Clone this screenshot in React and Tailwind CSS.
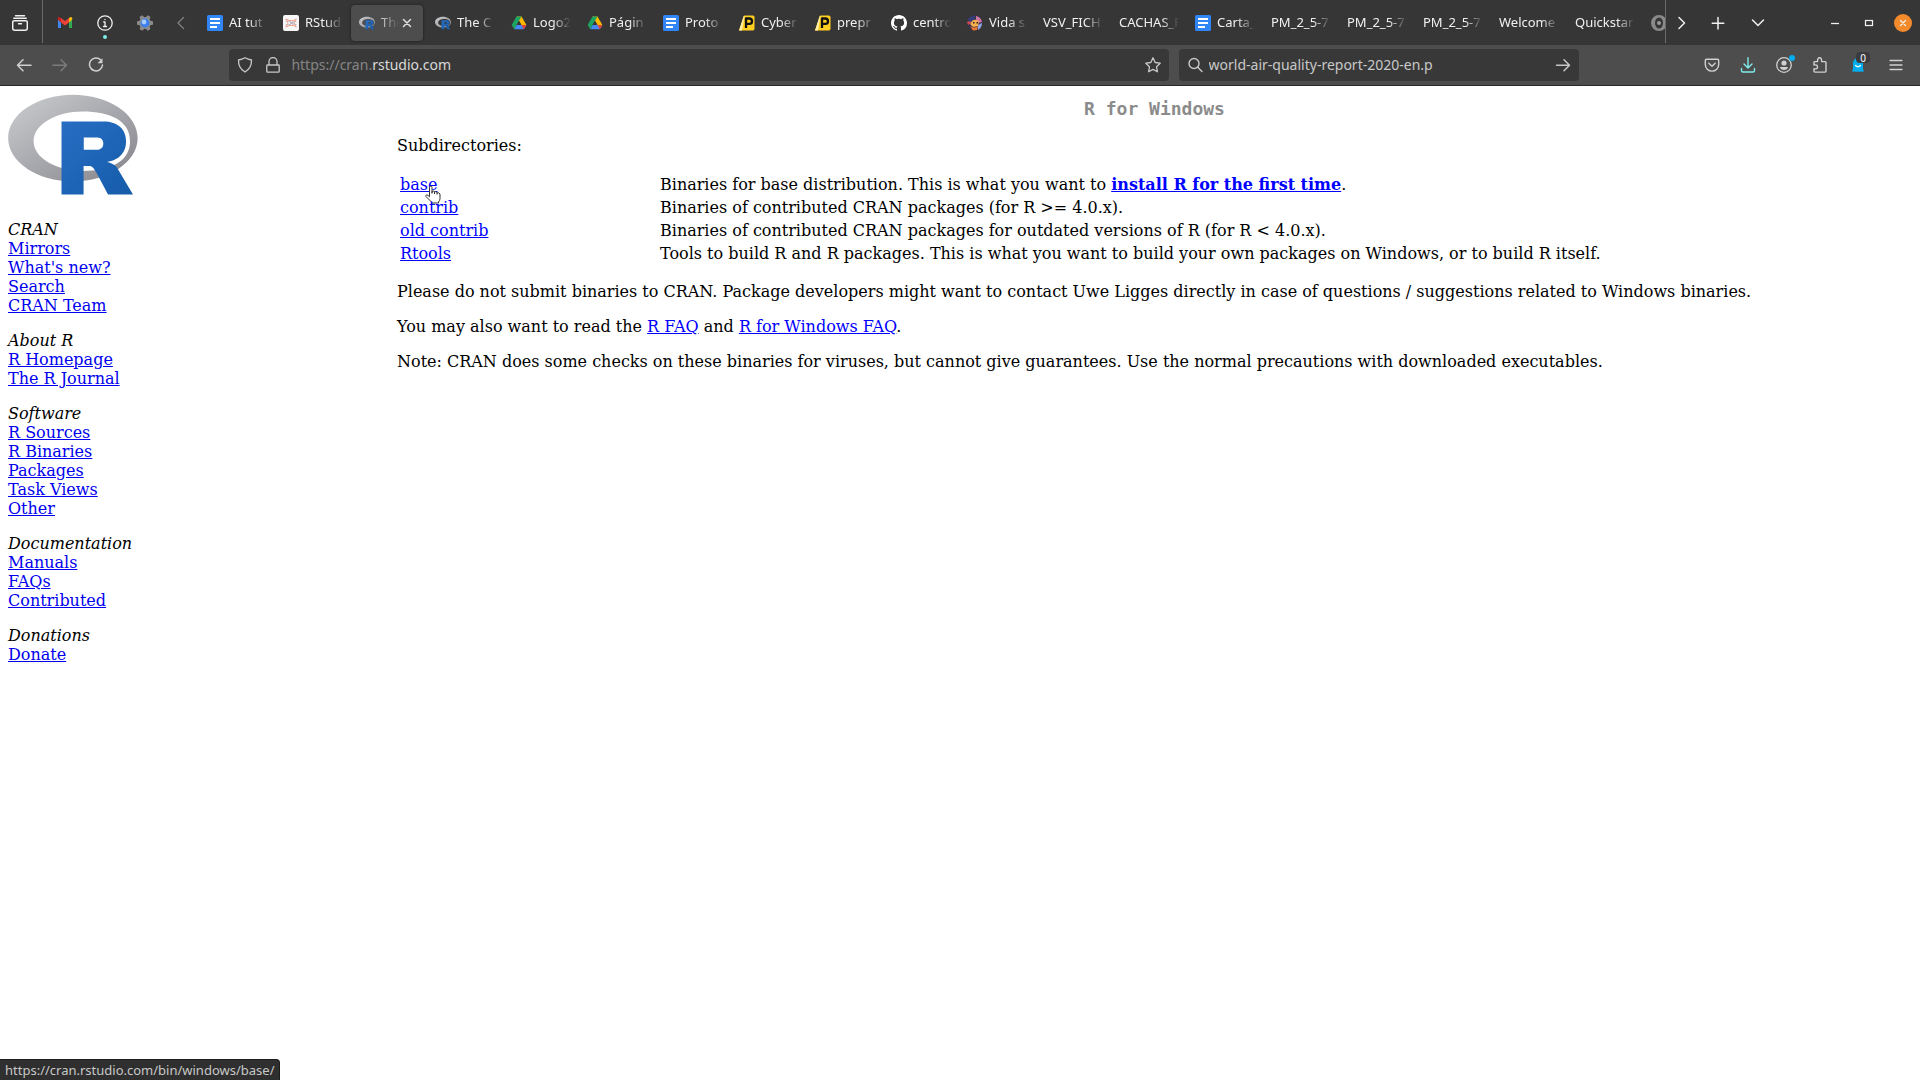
import React from "react";

const Svg = ({ children, className = "w-4 h-4", ...rest }) => (
  <svg
    viewBox="0 0 16 16"
    className={"block shrink-0 " + className}
    fill="none"
    stroke="currentColor"
    strokeWidth="1.25"
    strokeLinecap="round"
    strokeLinejoin="round"
    aria-hidden="true"
    {...rest}
  >
    {children}
  </svg>
);

const RLogo = ({ className, id }) => (
  <svg viewBox="0 0 724 561" className={"block shrink-0 " + className} role="img" aria-label="R logo">
    <defs>
      <linearGradient id={id + "g"} x1="0" y1="0" x2="1" y2="1">
        <stop offset="0" stopColor="#cbced0" />
        <stop offset="1" stopColor="#84838b" />
      </linearGradient>
      <linearGradient id={id + "b"} x1="0" y1="0" x2="1" y2="1">
        <stop offset="0" stopColor="#276dc3" />
        <stop offset="1" stopColor="#165caa" />
      </linearGradient>
    </defs>
    <path
      fill={"url(#" + id + "g)"}
      fillRule="evenodd"
      d="M361.453,485.937C162.329,485.937,0.906,377.828,0.906,244.469C0.906,111.109,162.329,3,361.453,3C560.578,3,722,111.109,722,244.469C722,377.828,560.578,485.937,361.453,485.937ZM416.641,97.406C265.289,97.406,142.594,171.314,142.594,262.484C142.594,353.654,265.289,427.562,416.641,427.562C567.992,427.562,679.687,377.033,679.687,262.484C679.687,147.971,567.992,97.406,416.641,97.406Z"
    />
    <path
      fill={"url(#" + id + "b)"}
      fillRule="evenodd"
      d="M550,377C550,377,571.822,383.585,584.5,390C588.899,392.226,596.51,396.668,602,402.5C607.378,408.212,610,414,610,414L696,559L557,559.062L492,437C492,437,478.69,414.131,470.5,407.5C463.668,401.969,460.755,400,454,400C449.298,400,420.974,400,420.974,400L421,558.974L298,559.026L298,152.938L545,152.938C545,152.938,657.5,154.967,657.5,262C657.5,369.033,550,377,550,377ZM496.5,241.024L422.037,240.976L422,310.026L496.5,310.002C496.5,310.002,531,309.895,531,274.877C531,239.155,496.5,241.024,496.5,241.024Z"
    />
  </svg>
);

const Docs = () => (
  <Svg stroke="none">
    <rect width="16" height="16" rx="1.5" fill="#3086f6" />
    <path d="M3 3h10v2H3zM3 7h10v2H3zM3 11h7v2H3z" fill="#fff" />
  </Svg>
);

const Drive = () => (
  <Svg stroke="none">
    <path d="M5.5 1.5h5l4.9 8.4h-5z" fill="#ffba00" />
    <path d="M3.2 14.3 5.6 10h9.8l-2.6 4.3z" fill="#4688f4" />
    <path d="M10.4 10h5l-2.6 4.3z" fill="#ea4335" />
    <path d="M5.5 1.5h5L3.2 14.3.7 10z" fill="#1ea362" />
    <path d="M8 5.8 10.4 10H5.6z" fill="#363636" />
  </Svg>
);

const Cyber = () => (
  <Svg stroke="none">
    <path d="M4.6 1.6Q5 .5 6.2.5h7.6A1.7 1.7 0 0 1 15.5 2.2v11.600A1.7 1.7 0 0 1 13.800 15.500H0z" fill="#ffce1f" />
    <path d="M4.600 1.600 5.600.6 3 15.500H0z" fill="#fff0a8" />
    <path d="M7 13V3.500h3.300a2.700 2.700 0 0 1 0 5.400H7" fill="none" stroke="#111" strokeWidth="2.300" strokeLinecap="butt" />
  </Svg>
);

const RStudio = () => (
  <Svg stroke="none">
    <rect width="16" height="16" rx="2" fill="#f7f7f8" />
    <g fill="none" strokeWidth="1">
      <path d="M3 4.500c4-1 6 7 10 7M3 11.500c4 1 6-7 10-7" stroke="#ef8f77" />
      <path d="M3 6.500c4-2 6 3 10 3M3 9.500c4 2 6-3 10-3" stroke="#a9b9cf" />
      <path d="M3 4 5 8 3 12M13 4 11 8l2 4M6 5.500h4M6 10.500h4" stroke="#f0a997" />
    </g>
  </Svg>
);

const Github = () => (
  <Svg stroke="none">
    <path
      fill="#fff"
      d="M8 0C3.580 0 0 3.580 0 8c0 3.540 2.290 6.530 5.470 7.590.4.070.55-.17.55-.38 0-.19-.01-.82-.01-1.490-2.010.37-2.530-.49-2.690-.94-.09-.23-.48-.94-.82-1.130-.28-.15-.68-.52-.01-.53.63-.01 1.080.58 1.230.82.72 1.210 1.870.87 2.330.66.07-.52.28-.87.51-1.070-1.780-.2-3.640-.89-3.640-3.950 0-.87.31-1.590.82-2.150-.08-.2-.36-1.020.08-2.120 0 0 .67-.21 2.200.82.64-.18 1.320-.27 2-.27s1.360.09 2 .27c1.530-1.040 2.200-.82 2.200-.82.44 1.100.16 1.920.08 2.120.51.56.82 1.270.82 2.150 0 3.070-1.870 3.750-3.650 3.950.29.25.54.73.54 1.480 0 1.070-.01 1.930-.01 2.200 0 .21.15.46.55.38A8.010 8.010 0 0 0 16 8c0-4.420-3.580-8-8-8z"
    />
  </Svg>
);

const Vida = () => (
  <Svg stroke="none">
    <circle cx="8" cy="8" r="7.500" fill="#3a3154" />
    <path d="M1 4Q5 0 8 1l-1 4-5 3z" fill="#343f78" />
    <path d="M9 1q5 1 6 6l-4 1-2-3z" fill="#d277a1" />
    <path d="M5 6q4-3 7 1l-1 4-5 1-3-3z" fill="#f5b04c" />
    <path d="M3 11q4 3 8 0l-1 4-4 .5z" fill="#ef7a2d" />
    <path d="m11 10 4-2q0 5-4 7z" fill="#8ca5dd" />
    <path d="M6 7h1.500v1.500H6zM9.500 7H11v1.500H9.500z" fill="#241a32" />
    <path d="M0 7l3-1 1 2-3 2z" fill="#cf4951" />
  </Svg>
);

const GreyDisc = () => (
  <Svg stroke="none">
    <circle cx="8" cy="8" r="8" fill="#8a8a8a" />
    <ellipse cx="8" cy="8" rx="4" ry="5.500" fill="#363636" />
    <circle cx="8" cy="8" r="2" fill="#9a9a9a" />
  </Svg>
);

const tabs = [
  { t: "AI tut", i: <Docs /> },
  { t: "RStud", i: <RStudio /> },
  { t: "The", i: <RLogo id="t1" className="w-4 h-4" />, active: true },
  { t: "The C", i: <RLogo id="t2" className="w-4 h-4" /> },
  { t: "Logo2", i: <Drive /> },
  { t: "Págin", i: <Drive /> },
  { t: "Proto", i: <Docs /> },
  { t: "Cyber", i: <Cyber /> },
  { t: "prepr", i: <Cyber /> },
  { t: "centro", i: <Github /> },
  { t: "Vida s", i: <Vida /> },
  { t: "VSV_FICH" },
  { t: "CACHAS_F" },
  { t: "Carta_", i: <Docs /> },
  { t: "PM_2_5-7" },
  { t: "PM_2_5-7" },
  { t: "PM_2_5-7" },
  { t: "Welcome" },
  { t: "Quickstar" },
  { t: "", i: <GreyDisc /> },
];

const Tab = ({ t, i, active }) => (
  <button
    role="tab"
    aria-selected={!!active}
    aria-label={t || "Tab"}
    className={
      "mx-0.5 flex h-9 w-[72px] shrink-0 items-center rounded pl-2 text-left text-[13px] " +
      (active ? "bg-[#4d4d4d] pr-2 text-[#d0d0d0] shadow-[0_0_3px_rgba(0,0,0,0.5)]" : "pr-1 text-[#f0f0f0]")
    }
  >
    {i}
    <span
      className={
        "min-w-0 flex-1 overflow-hidden whitespace-nowrap pb-0.5 [mask-image:linear-gradient(to_left,transparent,black_18px)] " +
        (i ? "ml-1.5" : "")
      }
    >
      {t || "\u00a0"}
    </span>
    {active && (
      <Svg className="w-4 h-4 text-[#e0e0e0]" strokeWidth="1.5">
        <path d="m4.500 4.500 7 7m0-7-7 7" />
      </Svg>
    )}
  </button>
);

const IconButton = ({ label, className, children }) => (
  <button aria-label={label} className={"relative flex shrink-0 items-center justify-center " + className}>
    {children}
  </button>
);

const sections = [
  ["CRAN", ["Mirrors", "What's new?", "Search", "CRAN Team"]],
  ["About R", ["R Homepage", "The R Journal"]],
  ["Software", ["R Sources", "R Binaries", "Packages", "Task Views", "Other"]],
  ["Documentation", ["Manuals", "FAQs", "Contributed"]],
  ["Donations", ["Donate"]],
];

const A = ({ children, className = "" }) => (
  <a href="#" className={"underline " + className}>
    {children}
  </a>
);

const Pointer = () => (
  <svg viewBox="0 0 18 20" className="pointer-events-none absolute left-[24px] top-[10px] h-5 w-[18px]" aria-hidden="true">
    <path
      d="M5.500 2.500Q5.500 1 6.700 1T8 2.500V8.500M8 8V6.500q1.200-1 2.500 0V9M10.500 7q1.400-.8 2.500.2V9.500M13 8q2-.8 3 1v4.500q0 2-1.500 3.500v1H7.500v-1L2 11.500q-.6-1.300.7-1.600 1 0 2.800 1.800V2.500"
      fill="#fff"
      stroke="#333"
      strokeWidth="1"
      strokeLinejoin="round"
    />
  </svg>
);

const rows = [
  ["base", <>Binaries for base distribution. This is what you want to <A className="font-bold">install R for the first time</A>.</>],
  ["contrib", "Binaries of contributed CRAN packages (for R >= 4.0.x)."],
  ["old contrib", "Binaries of contributed CRAN packages for outdated versions of R (for R < 4.0.x)."],
  ["Rtools", "Tools to build R and R packages. This is what you want to build your own packages on Windows, or to build R itself."],
];

export default function App() {
  return (
    <div className="flex min-h-screen flex-col bg-white font-['Noto_Sans',sans-serif] text-[14px] leading-5">
      <header className="border-b border-[#2a2629]">
        <div className="flex h-[45px] items-center bg-[#363636] text-[#f0f0f0]">
          <IconButton label="Archive" className="h-9 w-10">
            <Svg className="w-4 h-4" strokeWidth="1.500">
              <path d="M3.500.8h9M1.800 3.200h12.400M2.200 5.700h11.600q1.500 0 1.500 1.500v6q0 2-2 2H2.700q-2 0-2-2v-6q0-1.500 1.500-1.500zM6.500 8.700h3" />
            </Svg>
          </IconButton>
          <span className="mx-0.5 h-[43px] w-px self-start bg-[#6a6a6a]" />
          <IconButton label="Gmail" className="h-9 w-10">
            <Svg stroke="none">
              <path d="M1 3.500v9.500h3V7.500z" fill="#4285f4" />
              <path d="M15 3.500v9.500h-3V7.500z" fill="#34a853" />
              <path d="M.8 4.500V3.200q.7-1.700 2.500-.8L4 3v4.500z" fill="#c5221f" />
              <path d="M4 3l4 3 4-3v4.500l-4 3-4-3z" fill="#ea4335" />
              <path d="M15.200 4.500V3.200q-.7-1.700-2.500-.8L12 3v4.500z" fill="#fbbc04" />
            </Svg>
          </IconButton>
          <IconButton label="Info" className="h-9 w-10">
            <Svg>
              <circle cx="8" cy="8" r="7.200" strokeWidth="1.300" />
              <path d="M6.700 7H8v4.500M6.500 11.500h3M8 4.300v.3" strokeWidth="1.300" />
            </Svg>
            <span className="absolute bottom-0.5 left-[18px] h-1 w-1 rounded-full bg-[#80ebed]" />
          </IconButton>
          <IconButton label="Settings" className="h-9 w-10">
            <Svg stroke="none">
              <g fill="#8b8b8b">
                <rect x="6" y="0" width="4" height="16" rx="1" transform="rotate(30 8 8)" />
                <rect x="6" y="0" width="4" height="16" rx="1" transform="rotate(90 8 8)" />
                <rect x="6" y="0" width="4" height="16" rx="1" transform="rotate(150 8 8)" />
                <circle cx="8" cy="8" r="6" />
              </g>
              <circle cx="8" cy="8" r="4.400" fill="#3b7ff0" />
              <circle cx="7" cy="7" r="2.400" fill="#a9ccff" />
            </Svg>
          </IconButton>
          <IconButton label="Scroll tabs left" className="h-9 w-8 text-[#808080]">
            <Svg><path d="m10.500 2.500-5.500 5.500 5.500 5.500" /></Svg>
          </IconButton>
          <div role="tablist" className="flex min-w-0 flex-1 overflow-hidden py-1">
            {tabs.map((tab, n) => <Tab key={n} {...tab} />)}
          </div>
          <span className="h-[43px] w-px self-start bg-[#6a6a6a]" />
          <IconButton label="Scroll tabs right" className="h-9 w-8">
            <Svg strokeWidth="1.500"><path d="m5 2.500 5.500 5.500L5 13.500" /></Svg>
          </IconButton>
          <IconButton label="New tab" className="h-9 w-10">
            <Svg strokeWidth="1.500"><path d="M8 2.500v11.500M2.200 8.200h11.600" /></Svg>
          </IconButton>
          <IconButton label="List all tabs" className="h-9 w-10">
            <Svg strokeWidth="1.500"><path d="m2.500 5 5.500 5.500L13.500 5" /></Svg>
          </IconButton>
          <span className="w-10" />
          <IconButton label="Minimize" className="h-9 w-[34px]">
            <Svg><path d="M4 8.500h8" strokeWidth="1.300" strokeLinecap="butt" /></Svg>
          </IconButton>
          <IconButton label="Maximize" className="h-9 w-[34px]">
            <Svg><rect x="4.500" y="5.500" width="7" height="5" strokeLinejoin="miter" /></Svg>
          </IconButton>
          <IconButton label="Close window" className="h-9 w-[34px]">
            <span className="flex h-[18px] w-[18px] items-center justify-center rounded-full bg-[#f38b2c]">
              <Svg><path d="m5.500 5.500 5 5m0-5-5 5" /></Svg>
            </span>
          </IconButton>
        </div>

        <div className="flex h-10 items-center bg-[#4d4d4d] px-1.5 text-[#d0d0d0]">
          <IconButton label="Back" className="h-8 w-9">
            <Svg strokeWidth="1.500"><path d="M15 8.300H1.500M7 2.800 1.500 8.300 7 13.800" /></Svg>
          </IconButton>
          <IconButton label="Forward" className="h-8 w-9 text-[#7c7c7c]">
            <Svg strokeWidth="1.500"><path d="M1 8.300h13.500M9 2.800l5.500 5.500L9 13.800" /></Svg>
          </IconButton>
          <IconButton label="Reload" className="h-8 w-9">
            <Svg strokeWidth="1.500">
              <path d="M12.800 3A6.500 6.500 0 1 0 14.500 8" />
              <path d="M14.500 1.200v5h-5z" fill="currentColor" stroke="none" />
            </Svg>
          </IconButton>
          <span className="flex-[1_1_0]" />
          <div className="flex h-8 flex-[8_1_0] items-center rounded bg-[#383838] px-2 text-[#c8c8c8]">
            <Svg><path d="M8 .8Q11 2.500 14.500 3q.3 8-6.500 12Q1.200 11 1.500 3 5 2.500 8 .8z" strokeWidth="1.300" /></Svg>
            <Svg className="ml-3 w-4 h-4">
              <path d="M2.500 8h11q.7 0 .7.700v5.600q0 .9-.9.900H2.700q-.9 0-.9-.9V8.700q0-.7.7-.7zM4 8V4.500a4 4 0 0 1 8 0V8" strokeWidth="1.300" />
            </Svg>
            <div className="ml-2.5 flex-1 whitespace-nowrap">
              <span className="text-[#858585]">https://cran.</span>
              <span className="text-[#d8d8d8]">rstudio.com</span>
            </div>
            <button aria-label="Bookmark">
              <Svg><path d="m8 .8 2.200 4.700 5 .7-3.700 3.500.9 5.100L8 12.400l-4.400 2.400.9-5.100L.8 6.200l5-.7z" strokeWidth="1.300" /></Svg>
            </button>
          </div>
          <div className="ml-2.5 flex h-8 w-[400px] items-center rounded bg-[#383838] px-2 text-[#c8c8c8]">
            <Svg strokeWidth="1.400"><circle cx="7" cy="6.500" r="5" /><path d="m10.700 10.200 4.300 4.300" /></Svg>
            <input
              aria-label="Search"
              defaultValue="world-air-quality-report-2020-en.p"
              className="ml-1.5 min-w-0 flex-1 bg-transparent outline-none"
            />
            <button aria-label="Go">
              <Svg strokeWidth="1.500"><path d="M1.500 8.300h13M9 2.800l5.500 5.500L9 13.800" /></Svg>
            </button>
          </div>
          <span className="flex-[1_1_0]" />
          <IconButton label="Pocket" className="h-8 w-9">
            <Svg strokeWidth="1.400"><path d="M2.500 2.200h11q1.200 0 1.200 1.200v4a6.700 6.700 0 0 1-13.400 0v-4q0-1.200 1.200-1.200zM4.800 6.200 8 9.200l3.200-3" /></Svg>
          </IconButton>
          <IconButton label="Downloads" className="h-8 w-9 text-[#80ebed]">
            <Svg strokeWidth="1.400"><path d="M8 .8v10M4 7l4 4 4-4M1.500 11.500v2q0 1.500 1.500 1.500h10q1.500 0 1.500-1.500v-2" /></Svg>
          </IconButton>
          <IconButton label="Account" className="h-8 w-9">
            <Svg strokeWidth="1.300">
              <circle cx="8" cy="8" r="7.300" />
              <circle cx="8" cy="6" r="2.600" fill="currentColor" stroke="none" />
              <path d="M4 10h8q-.5 3-4 3t-4-3z" fill="currentColor" stroke="none" />
            </Svg>
            <span className="absolute right-[7px] top-1.5 h-1.5 w-1.5 rounded-full bg-[#00aef0]" />
          </IconButton>
          <IconButton label="Extensions" className="h-8 w-9">
            <Svg strokeWidth="1.400"><path d="M2 5.500q0-.9.900-.9h2.700q-.3-3.800 2-3.800t2 3.800h3.500q.9 0 .9.900v8.600q0 1-.9 1H3q-1 0-1-1v-2.300q3.500.5 3.500-1.900T2 8z" /></Svg>
          </IconButton>
          <IconButton label="Ghostery" className="ml-0.5 h-8 w-9">
            <Svg stroke="none">
              <path d="M3 14.800V6a5 5 0 0 1 10 0v8.800l-1.700-1-1.600 1.200L8 13.800l-1.700 1.200-1.600-1.200z" fill="#00aef0" />
              <path d="M2 14.500 3.500 11h9l1.500 3.500z" fill="#00aef0" />
              <path d="M5.500 8.500Q8 11 10.500 8.500" stroke="#fff" fill="none" />
            </Svg>
            <span className="absolute left-4 top-[3px] flex h-[11px] w-3.5 items-center justify-center rounded-sm bg-[#3a3a40] text-[10px] leading-none text-white">0</span>
          </IconButton>
          <IconButton label="Menu" className="ml-0.5 h-8 w-9">
            <Svg strokeWidth="1.300"><path d="M2 3.500h12M2 8h12M2 12.500h12" /></Svg>
          </IconButton>
        </div>
      </header>

      <div className="relative flex flex-1 font-['DejaVu_Serif',serif] text-[16px] leading-[19px] text-black">
        <nav className="w-1/5 shrink-0 p-2 text-black">
          <RLogo id="big" className="mb-[25px] h-[101px] w-[130px]" />
          {sections.map(([name, links]) => (
            <div key={name} className="mb-4">
              <em className="block">{name}</em>
              <ul>
                {links.map((l) => <li key={l}><A className="text-[#0000ee]">{l}</A></li>)}
              </ul>
            </div>
          ))}
        </nav>
        <main className="ml-[5px] flex-1 p-2 [&_a]:text-[#0000ff]">
          <h1 className="mt-1 text-center font-['DejaVu_Sans_Mono',monospace] text-[18px] font-bold leading-[22px] text-[#8b8b8b]">R for Windows</h1>
          <p className="mt-4">Subdirectories:</p>
          <table className="mt-[18px] w-full">
            <tbody>
              {rows.map(([k, v]) => (
                <tr key={k}>
                  <td className="w-[263px] px-[3px] py-0.5">
                    <span className="relative">
                      <A>{k}</A>
                      {k === "base" && <Pointer />}
                    </span>
                  </td>
                  <td className="py-0.5">{v}</td>
                </tr>
              ))}
            </tbody>
          </table>
          <p className="mt-[17px]">Please do not submit binaries to CRAN. Package developers might want to contact Uwe Ligges directly in case of questions / suggestions related to Windows binaries.</p>
          <p className="mt-4">You may also want to read the <A>R FAQ</A> and <A>R for Windows FAQ</A>.</p>
          <p className="mt-4">Note: CRAN does some checks on these binaries for viruses, but cannot give guarantees. Use the normal precautions with downloaded executables.</p>
        </main>
        <div className="absolute bottom-0 left-0 rounded-tr border-r border-t border-[#1c1c1c] bg-[#2f2f2f] px-[5px] font-['Noto_Sans',sans-serif] text-[13px] leading-5 text-[#c8c8c8]">
          https://cran.rstudio.com/bin/windows/base/
        </div>
      </div>
    </div>
  );
}
